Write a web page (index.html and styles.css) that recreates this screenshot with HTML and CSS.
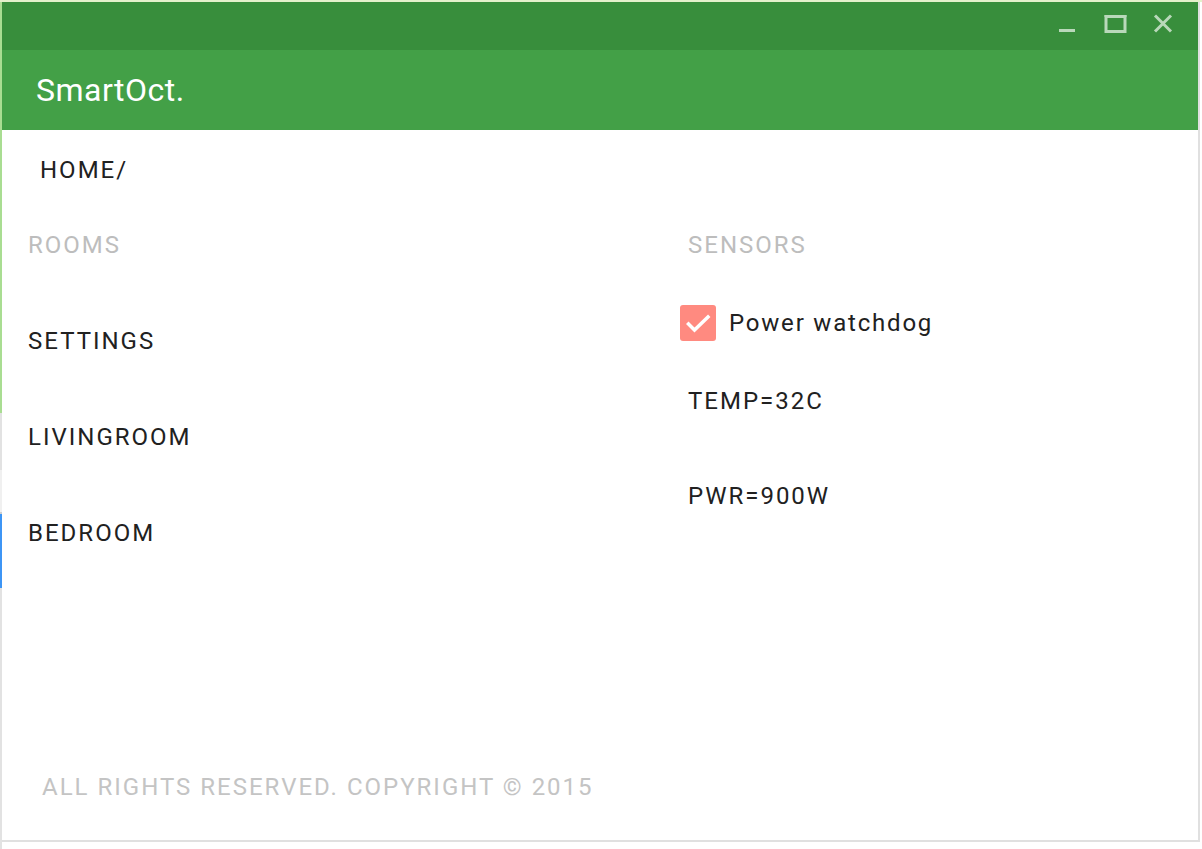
FILE: index.html
```html
<!DOCTYPE html>
<html lang="en">
<head>
<meta charset="utf-8">
<title>SmartOct.</title>
<link rel="stylesheet" href="styles.css">
</head>
<body>
<div class="window">
  <div class="titlebar">
    <button class="win-btn" aria-label="Minimize">
      <svg width="24" height="24" viewBox="0 0 24 24"><rect x="4" y="16" width="16" height="3" fill="currentColor"/></svg>
    </button>
    <button class="win-btn" aria-label="Maximize">
      <svg width="24" height="24" viewBox="0 0 24 24"><rect x="3" y="3.5" width="19" height="15" fill="none" stroke="currentColor" stroke-width="3"/><rect x="1.5" y="2" width="22" height="2" fill="currentColor"/></svg>
    </button>
    <button class="win-btn" aria-label="Close">
      <svg width="24" height="24" viewBox="0 0 24 24"><path d="M4 2.5 L20 18.5 M20 2.5 L4 18.5" stroke="currentColor" stroke-width="3" fill="none"/></svg>
    </button>
  </div>
  <header class="appbar">
    <h1 class="brand">SmartOct.</h1>
  </header>
  <main class="content">
    <div class="breadcrumb">HOME/</div>
    <div class="columns">
      <section class="col rooms">
        <h2 class="col-title">ROOMS</h2>
        <div class="room">SETTINGS</div>
        <div class="room">LIVINGROOM</div>
        <div class="room">BEDROOM</div>
      </section>
      <section class="col sensors">
        <h2 class="col-title pad">SENSORS</h2>
        <label class="check-row">
          <span class="checkbox">
            <svg width="36" height="36" viewBox="0 0 36 36"><polyline points="8.5,19 14.5,25 28,12" fill="none" stroke="#fff" stroke-width="3.5" stroke-linecap="square"/></svg>
          </span>
          <span class="check-label">Power watchdog</span>
        </label>
        <div class="reading temp">TEMP=32C</div>
        <div class="reading pwr">PWR=900W</div>
      </section>
    </div>
    <footer class="footer">ALL RIGHTS RESERVED. COPYRIGHT © 2015</footer>
  </main>
</div>
</body>
</html>
```
FILE: styles.css
```css
html, body {
  margin: 0;
  padding: 0;
}
body {
  width: 1202px;
  height: 849px;
  overflow: hidden;
  font-family: Roboto, "Liberation Sans", sans-serif;
  background:
    linear-gradient(#e4f1cb, #e4f1cb) 0 0 / 100% 2px no-repeat,
    linear-gradient(to bottom, #a9dd92 0, #a9dd92 413px, #e2e2e2 413px, #e2e2e2 470px, #f0f0f0 470px, #f0f0f0 512px, #d0d0d0 512px, #d0d0d0 514px, #3d95f5 514px, #3d95f5 588px, #e2e2e2 588px) 0 0 / 2px 100% no-repeat,
    #ffffff;
}
.window {
  margin: 2px 0 0 2px;
  width: 1196px;
  height: 838px;
  border-right: 2px solid #e0e0e0;
  border-bottom: 2px solid #e0e0e0;
  display: flex;
  flex-direction: column;
  background: #ffffff;
}
.titlebar {
  height: 48px;
  background: #388e3c;
  display: flex;
  justify-content: flex-end;
  align-items: center;
  padding-right: 11px;
}
.win-btn {
  width: 48px;
  height: 48px;
  border: 0;
  padding: 0;
  margin: 0;
  background: transparent;
  color: #b9d8ba;
  display: flex;
  align-items: center;
  justify-content: center;
}
.win-btn svg {
  display: block;
  margin-top: -2px;
}
.appbar {
  height: 80px;
  background: #43a047;
  display: flex;
  align-items: center;
  padding-left: 34px;
}
.brand {
  margin: 0;
  color: #ffffff;
  font-weight: 400;
  font-size: 32px;
  letter-spacing: 0.5px;
  line-height: 40px;
}
.content {
  flex: 1;
  display: flex;
  flex-direction: column;
  color: #212121;
  font-size: 24px;
  letter-spacing: 2px;
  line-height: 28px;
}
.breadcrumb {
  margin-top: 26px;
  padding-left: 38px;
}
.columns {
  display: grid;
  grid-template-columns: 652px 1fr;
  padding-left: 26px;
  margin-top: 47px;
}
.col {
  display: flex;
  flex-direction: column;
}
.col-title {
  margin: 0;
  font-size: 24px;
  font-weight: 400;
  color: #bdbdbd;
  line-height: 28px;
}
.col-title.pad {
  padding-left: 8px;
}
.room {
  margin-top: 68px;
}
.check-row {
  display: flex;
  align-items: center;
  gap: 13px;
  margin-top: 46px;
  height: 36px;
  letter-spacing: 1.8px;
}
.checkbox {
  width: 36px;
  height: 36px;
  border-radius: 3px;
  background: #ff8a80;
  display: block;
}
.checkbox svg {
  display: block;
}
.reading {
  padding-left: 8px;
}
.temp {
  margin-top: 46px;
}
.pwr {
  margin-top: 67px;
}
.footer {
  margin-top: auto;
  margin-bottom: 39px;
  padding-left: 40px;
  color: #c4c4c4;
}
```
